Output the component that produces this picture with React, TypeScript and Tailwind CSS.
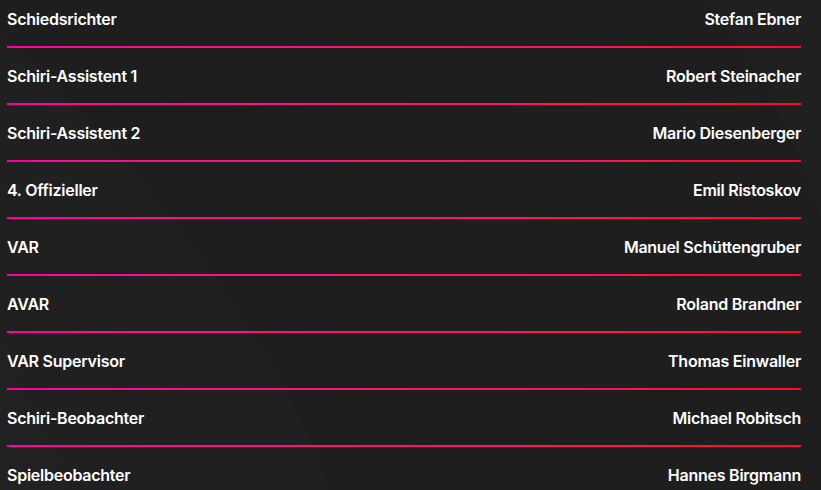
import React from "react";

const rows: [string, string][] = [
  ["Schiedsrichter", "Stefan Ebner"],
  ["Schiri-Assistent 1", "Robert Steinacher"],
  ["Schiri-Assistent 2", "Mario Diesenberger"],
  ["4. Offizieller", "Emil Ristoskov"],
  ["VAR", "Manuel Schüttengruber"],
  ["AVAR", "Roland Brandner"],
  ["VAR Supervisor", "Thomas Einwaller"],
  ["Schiri-Beobachter", "Michael Robitsch"],
  ["Spielbeobachter", "Hannes Birgmann"],
];

export default function App() {
  return (
    <div className="relative h-[490px] w-[821px] overflow-hidden bg-[#1e1e1e]">
      <svg className="absolute inset-0 h-full w-full" viewBox="0 0 821 490" preserveAspectRatio="none">
        <path d="M0 30 C120 150 260 300 330 490 L0 490 Z" fill="#202020" />
        <path d="M700 0 C760 60 800 150 821 220 L821 0 Z" fill="#202020" />
        <path d="M0 330 C40 420 60 460 70 490 L0 490 Z" fill="#212121" />
      </svg>
      <div className="relative -mt-[9px] pl-[7px] pr-[20px] font-['Inter',sans-serif] text-[16px] font-semibold tracking-[-0.25px] text-white">
        {rows.map(([role, name]) => (
          <div key={role}>
            <div className="flex h-[55px] items-center justify-between">
              <span>{role}</span>
              <span>{name}</span>
            </div>
            <div className="h-[2px] bg-gradient-to-r from-[#ff00a0] to-[#ff0a28]" />
          </div>
        ))}
      </div>
    </div>
  );
}
